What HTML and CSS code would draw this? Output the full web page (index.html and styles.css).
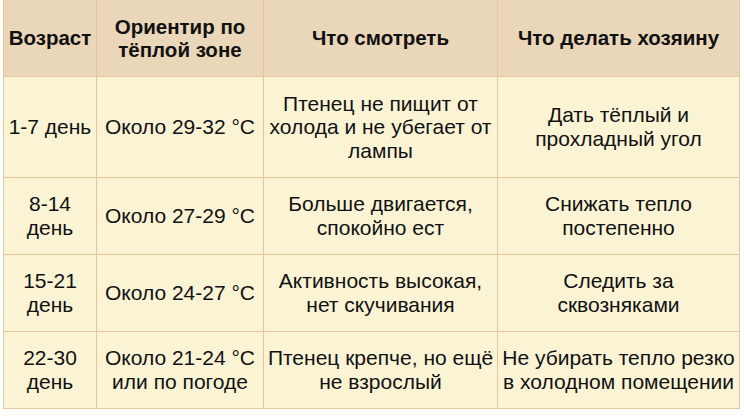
FILE: index.html
```html
<!DOCTYPE html>
<html lang="ru">
<head>
<meta charset="utf-8">
<link rel="stylesheet" href="styles.css">
</head>
<body>
<div class="wrap">
<table class="care">
<colgroup>
<col class="c1"><col class="c2"><col class="c3"><col class="c4">
</colgroup>
<thead>
<tr>
<th>Возраст</th>
<th>Ориентир по тёплой зоне</th>
<th>Что смотреть</th>
<th>Что делать хозяину</th>
</tr>
</thead>
<tbody>
<tr>
<td>1-7 день</td>
<td>Около 29-32 °C</td>
<td>Птенец не пищит от холода и не убегает от лампы</td>
<td>Дать тёплый и прохладный угол</td>
</tr>
<tr>
<td>8-14 день</td>
<td>Около 27-29 °C</td>
<td>Больше двигается, спокойно ест</td>
<td>Снижать тепло постепенно</td>
</tr>
<tr>
<td>15-21 день</td>
<td>Около 24-27 °C</td>
<td>Активность высокая, нет скучивания</td>
<td>Следить за сквозняками</td>
</tr>
<tr>
<td>22-30 день</td>
<td>Около 21-24 °C или по погоде</td>
<td>Птенец крепче, но ещё не взрослый</td>
<td>Не убирать тепло резко в холодном помещении</td>
</tr>
</tbody>
</table>
</div>
</body>
</html>
```

FILE: styles.css
```css
html, body {
  margin: 0;
  padding: 0;
  background: #ffffff;
}
.wrap {
  padding: 0 0 0 3px;
}
.care {
  width: 736px;
  table-layout: fixed;
  border-collapse: collapse;
  font-family: "Liberation Sans", Arial, sans-serif;
  font-size: 21px;
  line-height: 23.5px;
  color: #111111;
}
.c1 { width: 93px; }
.c2 { width: 167px; }
.c3 { width: 234px; }
.c4 { width: 242px; }
.care th, .care td {
  border: 1px solid #e5c79c;
  padding: 14.5px 3px;
  text-align: center;
  vertical-align: middle;
}
.care thead tr th {
  border-top: none;
  background: #ead6b8;
  font-weight: bold;
  font-size: 20.5px;
}
.care td {
  background: #faf4d5;
}
```
